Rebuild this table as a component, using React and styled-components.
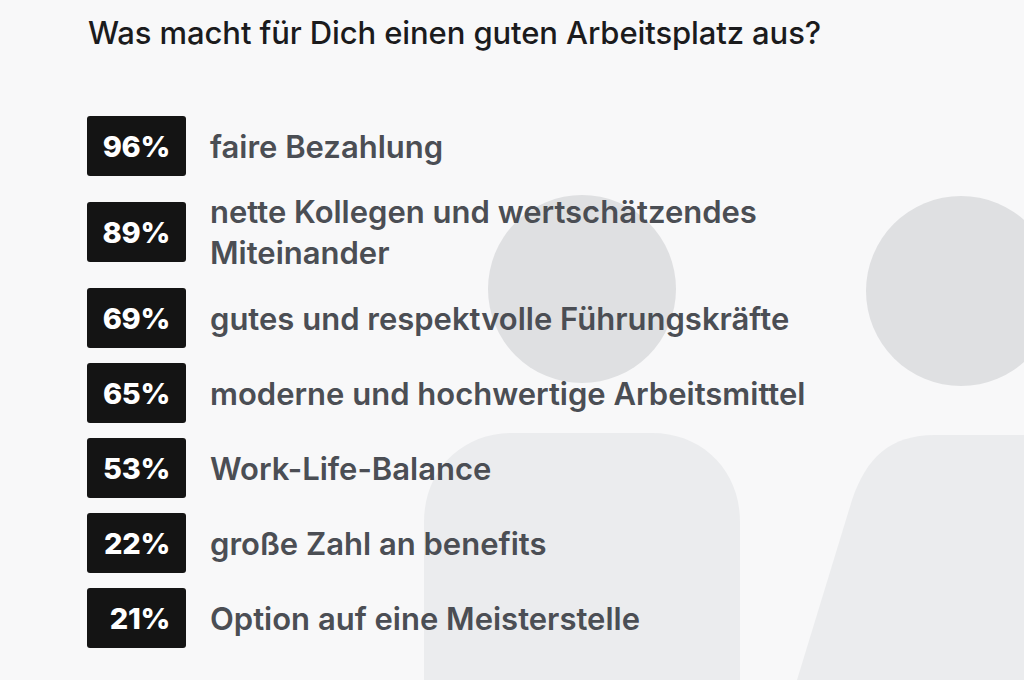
import React from 'react';
import styled, { createGlobalStyle } from 'styled-components';

const GlobalStyle = createGlobalStyle`
  html, body {
    margin: 0;
    padding: 0;
    background: #f8f8f9;
  }
  body {
    font-family: Inter, "Noto Sans", "Liberation Sans", sans-serif;
  }
`;

const Page = styled.div`
  position: relative;
  width: 1024px;
  height: 680px;
  overflow: hidden;
  background: #f8f8f9;
`;

const Backdrop = styled.svg`
  position: absolute;
  left: 0;
  top: 0;
  z-index: 0;
`;

const Content = styled.div`
  position: relative;
  z-index: 1;
  padding: 16px 0 0 87px;
`;

const Title = styled.h1`
  margin: 0 0 0 1px;
  font-size: 31px;
  line-height: 34px;
  font-weight: 500;
  color: #1b1b1d;
  letter-spacing: -0.1px;
`;

const List = styled.ul`
  list-style: none;
  margin: 66px 0 0;
  padding: 0;
  display: flex;
  flex-direction: column;
  gap: 15px;
`;

const Row = styled.li`
  display: flex;
  align-items: center;
  gap: 24px;
`;

const Badge = styled.span`
  flex: 0 0 auto;
  width: 99px;
  height: 60px;
  box-sizing: border-box;
  padding-right: 16px;
  display: flex;
  align-items: center;
  justify-content: flex-end;
  background: #141414;
  border-radius: 3px;
  color: #ffffff;
  font-size: 29px;
  font-weight: 800;
  letter-spacing: -0.3px;
`;

const Label = styled.span`
  max-width: 600px;
  font-size: 31px;
  line-height: 41px;
  font-weight: 600;
  color: #4b4e54;
`;

const items = [
  ['96%', 'faire Bezahlung'],
  ['89%', 'nette Kollegen und wertschätzendes Miteinander'],
  ['69%', 'gutes und respektvolle Führungskräfte'],
  ['65%', 'moderne und hochwertige Arbeitsmittel'],
  ['53%', 'Work-Life-Balance'],
  ['22%', 'große Zahl an benefits'],
  ['21%', 'Option auf eine Meisterstelle'],
];

const People = () => (
  <Backdrop width="1024" height="680" viewBox="0 0 1024 680">
    <circle cx="582" cy="289" r="94" fill="#dfe0e2" />
    <circle cx="961" cy="291" r="95" fill="#dfe0e2" />
    <path
      d="M424 680 L424 522 C424 470 462 433 512 433 L652 433 C702 433 740 470 740 522 L740 680 Z"
      fill="#ebecee"
    />
    <path
      d="M797 680 L852 500 C866 458 890 435 935 435 L1024 435 L1024 680 Z"
      fill="#ebecee"
    />
  </Backdrop>
);

export default function App() {
  return (
    <Page>
      <GlobalStyle />
      <People />
      <Content>
        <Title>Was macht für Dich einen guten Arbeitsplatz aus?</Title>
        <List>
          {items.map(([pct, text]) => (
            <Row key={pct}>
              <Badge>{pct}</Badge>
              <Label>{text}</Label>
            </Row>
          ))}
        </List>
      </Content>
    </Page>
  );
}
